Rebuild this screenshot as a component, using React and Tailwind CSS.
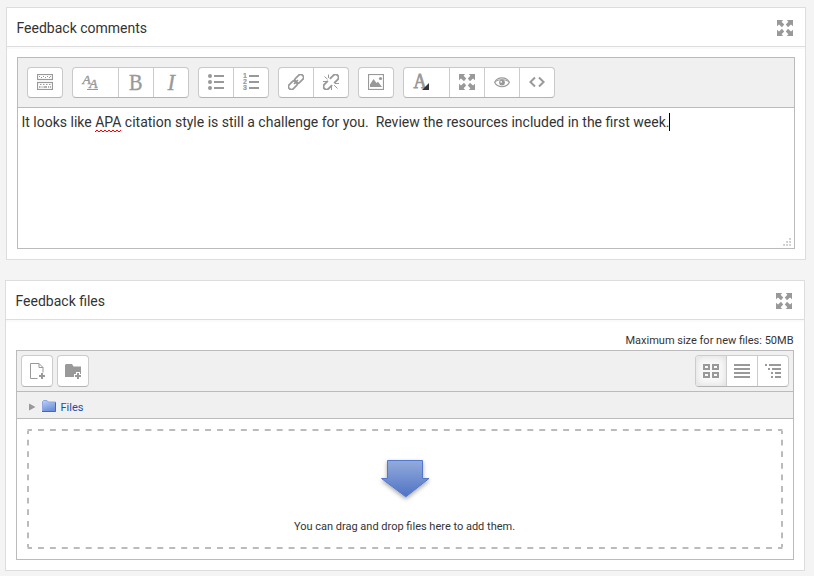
import React from "react";

const G = "#999";

function Svg({ children, w = 16, h = 16, className = "" }) {
  return (
    <svg width={w} height={h} viewBox={`0 0 ${w} ${h}`} className={`block shrink-0 ${className}`}>
      {children}
    </svg>
  );
}

function Expand() {
  return (
    <Svg>
      <g fill={G}>
        {["", "translate(16 0) scale(-1 1)", "translate(0 16) scale(1 -1)", "translate(16 16) scale(-1 -1)"].map((t) => (
          <path key={t} transform={t} d="M0 0H6.2L4.6 1.8L7.2 4.6L5 7.2L2 4.4L0 6.2Z" />
        ))}
      </g>
    </Svg>
  );
}

function Keyboard() {
  return (
    <Svg>
      <rect x="0.5" y="0.5" width="15" height="5" fill="none" stroke={G} strokeWidth="1.2" />
      <rect x="0.5" y="8.5" width="15" height="7" fill="none" stroke={G} strokeWidth="1.2" />
      <path d="M2 2.5H3M4 3.5H5M6 2.5H7M8 3.5H9M10 2.5H11M12 3.5H13M13 2.5H14" stroke={G} />
      <path d="M3 10.5H4.5M6 10.5H7.5M9 10.5H10.5M12 10.5H13.5" stroke={G} />
      <path d="M2 13H3.5M4.5 13H5.5M6.5 13H10M11 13H12M12.8 13H14" stroke={G} strokeWidth="1.4" />
    </Svg>
  );
}

const serif = "'Liberation Serif', serif";

const FontStyle = () => (
  <Svg className="overflow-visible">
    <g fill={G} stroke={G} strokeWidth="0.4" fontFamily={serif} fontStyle="italic">
      <text x="0.6" y="9.5" fontSize="13.5">A</text>
      <text x="7.2" y="14" fontSize="13.5">A</text>
    </g>
    <path d="M5 15.5H16" stroke={G} />
  </Svg>
);
const Bold = () => (
  <Svg className="overflow-visible">
    <text x="1" y="15.5" fontSize="22.5" textLength="13.5" lengthAdjust="spacingAndGlyphs" fill={G} stroke={G} strokeWidth="0.4" fontFamily={serif}>B</text>
  </Svg>
);
const Italic = () => (
  <Svg className="overflow-visible">
    <text x="4.6" y="15.5" fontSize="22.5" fill={G} stroke={G} strokeWidth="0.3" fontFamily={serif} fontStyle="italic">I</text>
  </Svg>
);
const Bullets = () => (
  <Svg>
    <g fill={G}>
      {[2, 8, 14].map((y) => (
        <React.Fragment key={y}>
          <circle cx="2" cy={y} r="2" />
          <rect x="6" y={y - 1} width="10" height="2" />
        </React.Fragment>
      ))}
    </g>
  </Svg>
);
const Numbers = () => (
  <Svg className="overflow-visible">
    <g fill={G} stroke={G} strokeWidth="0.2" fontFamily="'Liberation Sans', sans-serif" fontWeight="700" fontSize="7">
      {[2, 8, 14].map((y, i) => (
        <React.Fragment key={y}>
          <text x="0" y={y + 2.4}>{i + 1}</text>
          <rect x="6" y={y - 1} width="10" height="2" stroke="none" />
        </React.Fragment>
      ))}
    </g>
  </Svg>
);
const Link = () => (
  <Svg>
    <g fill="none" stroke={G} strokeWidth="1.7" transform="rotate(-45 8 8)">
      <rect x="-1.4" y="5.1" width="10" height="5.8" rx="2.9" />
      <rect x="7.4" y="5.1" width="10" height="5.8" rx="2.9" />
      <path d="M5.2 8H10.8" />
    </g>
  </Svg>
);
const Unlink = () => (
  <Svg>
    <g fill="none" stroke={G} strokeWidth="1.9" transform="rotate(-45 8 8)">
      <path d="M6.6 5H1.6a3 3 0 0 0 0 6H6.6" />
      <path d="M9.4 5h5a3 3 0 0 1 0 6h-5" />
    </g>
    <path d="M5.5 0.5V4M1.5 2.5L4.5 5.2M0 7.5H4M8.5 12V16M11.2 11.2L14.5 14.5M12 9.5H16" stroke={G} strokeWidth="1" />
  </Svg>
);
const Picture = () => (
  <Svg>
    <rect x="0.5" y="0.5" width="15" height="15" fill="none" stroke={G} strokeWidth="1.2" />
    <path d="M2 13V10.5L5.5 5L8.5 9L10 7.8L14 13Z" fill={G} />
    <circle cx="12.5" cy="4.5" r="1.6" fill={G} />
  </Svg>
);
const FontColor = () => (
  <Svg className="overflow-visible">
    <text x="0.6" y="13.5" fontSize="20" textLength="13" lengthAdjust="spacingAndGlyphs" fill={G} stroke={G} strokeWidth="0.8" fontFamily={serif}>A</text>
    <path d="M16 9V16H9Z" fill="#333" />
  </Svg>
);
const Eye = () => (
  <Svg>
    <path d="M0.6 8.3C3.5 2.4 12.5 2.4 15.4 8.3C12.5 14.2 3.5 14.2 0.6 8.3Z" fill="none" stroke={G} strokeWidth="1.1" />
    <path d="M1.2 8C4.5 4.9 11.5 4.9 14.8 8" fill="none" stroke={G} />
    <circle cx="8" cy="8.6" r="2.9" fill={G} />
    <circle cx="7.2" cy="7.8" r="0.9" fill="#fff" />
  </Svg>
);
const Code = () => (
  <Svg>
    <path d="M6 3.5L1.4 8L6 12.5M10 3.5L14.6 8L10 12.5" fill="none" stroke={G} strokeWidth="2" />
  </Svg>
);

const NewFile = () => (
  <Svg>
    <path d="M8.5 15.5H1.5V0.5H10L14 4.5V9.5M10 0.5V4.5H14" fill="none" stroke={G} />
    <path d="M10 13H16M13 10V16" stroke={G} strokeWidth="2" />
  </Svg>
);
const NewFolder = () => (
  <Svg>
    <path d="M0 14V2L1 1H7L8.5 3.5H16V14Z" fill={G} />
    <path d="M9 13H17M13 9V17" stroke="#fff" strokeWidth="4" />
    <path d="M10 13H16M13 10V16" stroke={G} strokeWidth="2" />
  </Svg>
);
const Grid = () => (
  <Svg>
    {[[1, 2], [10, 2], [1, 10], [10, 10]].map(([x, y]) => (
      <rect key={`${x}-${y}`} x={x} y={y} width="5" height="4" fill="none" stroke={G} strokeWidth="2" />
    ))}
  </Svg>
);
const Rows = () => (
  <Svg>
    <path d="M0 2H16M0 6H16M0 10H16M0 14H16" stroke={G} strokeWidth="2" />
  </Svg>
);
const Tree = () => (
  <Svg>
    <path d="M0 2H2M4 2H16M3 6H5M7 6H16M6 10H8M10 10H16M6 14H8M10 14H16" stroke={G} strokeWidth="2" />
  </Svg>
);

function Group({ items }) {
  return (
    <div className="flex h-[31px] overflow-hidden rounded-[4px] border border-[#c9c9c9] border-b-[#b3b3b3] bg-white">
      {items.map(([Icon, wide], i) => (
        <div
          key={i}
          className={`flex items-start pl-[9px] pt-[6px] ${i ? "border-l border-[#ccc]" : ""} ${
            wide ? "w-[45px]" : i ? "w-[35px]" : "w-[34px]"
          }`}
        >
          <Icon />
        </div>
      ))}
    </div>
  );
}

function DashedFrame() {
  return (
    <svg width="756" height="120" className="absolute inset-0">
      <g stroke="#bbb" strokeWidth="2">
        <path d="M2 1H754M2 119H754" strokeDasharray="5.968 5.968" strokeDashoffset="2.98" />
        <path d="M1 2V118M755 2V118" strokeDasharray="5.8 5.8" strokeDashoffset="2.9" />
        <path d="M0.5 1H2M754 1H755.5M0.5 119H2M754 119H755.5" />
      </g>
    </svg>
  );
}

function Panel({ title, className, children }) {
  return (
    <section className={`w-[800px] border border-[#ddd] bg-white ${className}`}>
      <header className="flex h-[39px] items-start justify-between border-b border-[#ddd] pl-[9.5px] pr-[12px] pt-3">
        <h2 className="-mt-[2px] text-[14px] leading-5">{title}</h2>
        <Expand />
      </header>
      <div className="h-[2px] bg-[#fafafa]" />
      {children}
    </section>
  );
}

export default function App() {
  return (
    <main className="flex h-[576px] w-[814px] flex-col overflow-hidden bg-[#f4f4f4] pt-[7px] font-['Roboto',sans-serif] text-[#333]">
      <Panel title="Feedback comments" className="ml-[6px] h-[253px]">
        <div className="ml-[10px] mt-[8px] flex h-[192px] w-[778px] flex-col border border-[#bbb]">
          <div className="flex h-[50px] gap-[9px] border-b border-[#bbb] bg-[#f0f0f0] pl-[9px] pt-[9px]">
            <Group items={[[Keyboard]]} />
            <Group items={[[FontStyle, true], [Bold], [Italic]]} />
            <Group items={[[Bullets], [Numbers]]} />
            <Group items={[[Link], [Unlink]]} />
            <Group items={[[Picture]]} />
            <Group items={[[FontColor, true], [Expand], [Eye], [Code]]} />
          </div>
          <div className="relative flex-1 pl-[3.5px] pt-[4px]">
            <p className="flex whitespace-pre text-[14px] leading-5">
              <span>It looks like </span>
              <span className="relative">
                APA
                <svg width="26" height="4" className="absolute -bottom-px left-0">
                  <path d="M0 3L2 1L4 3L6 1L8 3L10 1L12 3L14 1L16 3L18 1L20 3L22 1L24 3L26 1" fill="none" stroke="#f00" strokeWidth="1" />
                </svg>
              </span>
              <span> citation style is still a challenge for you.  Review the resources included in the first week.</span>
              <span className="mt-px h-[18px] w-px bg-black" />
            </p>
            <svg width="8" height="8" className="absolute bottom-[2px] right-[3px]">
              <g fill="#b0b0b0">
                {[[6, 0], [3, 3], [6, 3], [0, 6], [3, 6], [6, 6]].map(([x, y]) => (
                  <rect key={`${x}-${y}`} x={x + 0.3} y={y + 0.2} width="1.5" height="1.5" />
                ))}
              </g>
            </svg>
          </div>
        </div>
      </Panel>

      <Panel title="Feedback files" className="ml-[5px] mt-[20px] h-[291px] shrink-0">
        <div className="mt-[11px] h-[17px] pr-[10.5px] text-right text-[11px] leading-[16px]">Maximum size for new files: 50MB</div>
        <div className="ml-[10px] flex h-[210px] w-[778px] flex-col border border-[#bbb]">
          <div className="flex h-[41px] items-start border-b border-[#bbb] bg-[#f0f0f0] pl-[4px] pr-[4px] pt-[4px]">
            <div className="flex h-[32px] w-[32px] items-center justify-center rounded-[4px] border border-[#ccc] border-b-[#b3b3b3] bg-white">
              <NewFile />
            </div>
            <div className="ml-[4px] flex h-[32px] w-[32px] items-center justify-center rounded-[4px] border border-[#ccc] border-b-[#b3b3b3] bg-white">
              <NewFolder />
            </div>
            <div className="ml-auto flex h-[32px] w-[94px] overflow-hidden rounded-[4px] border border-[#ccc] border-b-[#b3b3b3] bg-white">
              <div className="flex w-[30px] items-center justify-center bg-[#fafafa] shadow-[inset_0_0_8px_#d8d8d8]">
                <Grid />
              </div>
              <div className="flex w-[31px] items-center justify-center border-l border-[#ccc]">
                <Rows />
              </div>
              <div className="flex w-[31px] items-center justify-center border-l border-[#ccc]">
                <Tree />
              </div>
            </div>
          </div>
          <div className="flex h-[27px] items-center border-b border-[#bbb] bg-[#f0f0f0] pl-[12px] text-[11px] text-[#1c4ea8]">
            <svg width="7" height="8" className="mt-[3px]">
              <path d="M0 0.5L6.5 4L0 7.5Z" fill={G} />
            </svg>
            <svg width="14" height="13" className="ml-[6px] mt-[2px]">
              <defs>
                <linearGradient id="folder" x1="0" y1="0" x2="0.4" y2="1">
                  <stop offset="0" stopColor="#c0d0f2" />
                  <stop offset="1" stopColor="#6b90dc" />
                </linearGradient>
              </defs>
              <path d="M0.5 11.5V1.5L1.5 0.5H5L6.2 2H13.5V11.5Z" fill="url(#folder)" stroke="#8ba8e2" />
              <path d="M0 11.5H13.5V2.5" fill="none" stroke="#3d68c0" />
            </svg>
            <span className="ml-[4.5px] mt-[6px]">Files</span>
          </div>
          <div className="relative ml-[10px] mt-[10px] flex h-[120px] w-[756px] flex-col items-center pt-[29px]">
            <DashedFrame />
            <svg width="56" height="48" className="block">
              <defs>
                <linearGradient id="arrow" x1="0" y1="0" x2="0" y2="1">
                  <stop offset="0" stopColor="#93abdc" />
                  <stop offset="1" stopColor="#4f73c4" />
                </linearGradient>
                <filter id="shade" x="-20%" y="-20%" width="140%" height="150%">
                  <feDropShadow dx="0" dy="2" stdDeviation="2" floodOpacity="0.35" />
                </filter>
              </defs>
              <path d="M10.5 2.5H45.5V20.5H52L28.8 38.8L4.5 20.5H10.5Z" fill="url(#arrow)" stroke="#5278cb" filter="url(#shade)" />
            </svg>
            <p className="mt-[13px] pr-px text-[11px] leading-4">You can drag and drop files here to add them.</p>
          </div>
        </div>
      </Panel>
    </main>
  );
}
